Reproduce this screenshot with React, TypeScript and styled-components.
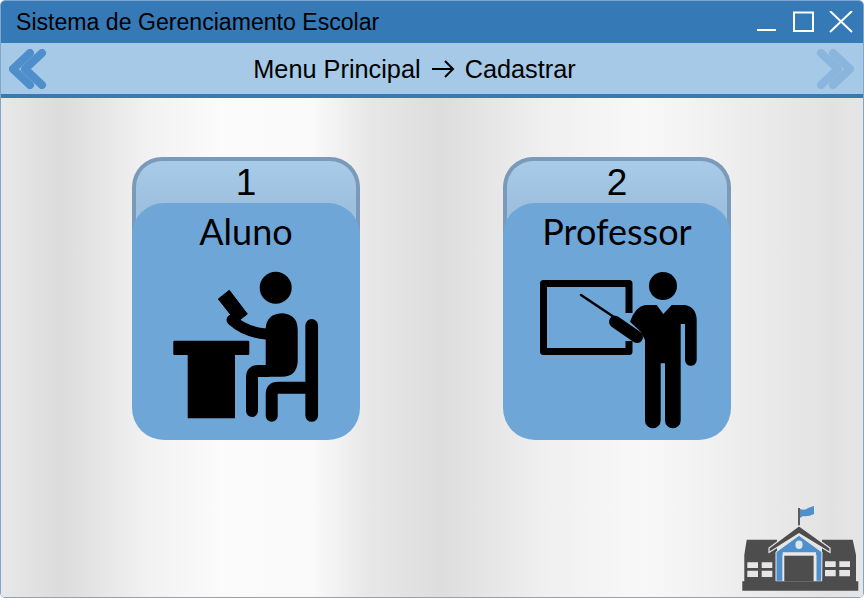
import styled, { createGlobalStyle } from "styled-components";

const GlobalStyle = createGlobalStyle`
  html, body {
    margin: 0;
    padding: 0;
    background: #ffffff;
  }
`;

const Window = styled.div`
  box-sizing: border-box;
  width: 864px;
  height: 598px;
  display: flex;
  flex-direction: column;
  border: 1px solid #7fa6cc;
  border-radius: 5px;
  overflow: hidden;
  font-family: "Liberation Sans", Arial, sans-serif;
  color: #000;
`;

const TitleBar = styled.header`
  height: 42px;
  flex: none;
  display: flex;
  align-items: center;
  justify-content: space-between;
  padding: 0 10px 0 15px;
  background: #3579b6;
  font-size: 23.1px;
`;

const WindowButtons = styled.div`
  display: flex;
  align-items: center;
  gap: 15px;
`;

const NavBar = styled.nav`
  height: 55px;
  flex: none;
  box-sizing: border-box;
  display: flex;
  align-items: center;
  justify-content: space-between;
  padding: 0 9px 0 8px;
  background: #a5c9e6;
  border-bottom: 4px solid #3579b6;
`;

const Crumbs = styled.div`
  display: flex;
  align-items: center;
  gap: 10px;
  font-size: 25.3px;
  padding: 1px 34px 0 0;
`;

const Main = styled.main`
  flex: 1;
  display: flex;
  flex-direction: column;
  justify-content: space-between;
  padding: 59px 3px 4px 131px;
  background: linear-gradient(
    90deg,
    #e8e8e8 0px,
    #dcdcdc 60px,
    #f2f2f2 150px,
    #fbfbfb 220px,
    #fafafa 310px,
    #e8e8e8 365px,
    #dddddd 440px,
    #efefef 540px,
    #f8f8f8 640px,
    #f3f3f3 690px,
    #e2e2e2 830px,
    #e6e6e6 864px
  );
`;

const Cards = styled.div`
  display: flex;
  gap: 143px;
`;

const Card = styled.div`
  position: relative;
  width: 228px;
  height: 283px;
`;

const Tab = styled.div`
  box-sizing: border-box;
  height: 92px;
  text-align: center;
  font-size: 37px;
  line-height: 44px;
  border: 4px solid #7b99b8;
  border-bottom: none;
  border-radius: 30px 30px 0 0;
  background: linear-gradient(180deg, #a7cbe8 0%, #9dc0df 50%);
`;

const Face = styled.div`
  position: absolute;
  left: 0;
  right: 0;
  top: 46px;
  bottom: 0;
  display: flex;
  flex-direction: column;
  align-items: center;
  background: #6fa6d8;
  border-radius: 32px;
`;

const FaceLabel = styled.div`
  height: 58px;
  font-family: Lato, sans-serif;
  font-size: 36px;
  line-height: 57px;
`;

const Picture = styled.svg`
  display: block;
`;

const Footer = styled.footer`
  display: flex;
  justify-content: flex-end;
`;

function Student() {
  return (
    <Picture width="228" height="178" viewBox="0 0 228 178">
      <circle cx="143.7" cy="26.7" r="16" fill="#000" />
      <path d="M86.3 38 L97.3 29.3 L115.3 53 L104.7 61.3 Z" fill="#000" stroke="#000" strokeWidth="1" strokeLinejoin="round" />
      <path d="M100 59 Q113 71 134 73" fill="none" stroke="#000" strokeWidth="11" strokeLinecap="round" />
      <path d="M133.7 67.3 Q134.7 52.3 151.3 52.3 Q165.7 54 165.7 69 L165.7 100.7 Q164.7 115.7 149.7 115.7 L126.3 115.7 L126.3 104 L133.7 104 Z" fill="#000" />
      <path d="M135 110 L126 110 Q120 110 120 116 L120 150" fill="none" stroke="#000" strokeWidth="12" strokeLinecap="round" />
      <path d="M42.3 79.7 L116.3 79.7 Q117.3 79.7 117.3 80.7 L117.3 93 Q117.3 94 116.3 94 L103 94 L103 157.3 L55.7 157.3 L55.7 94 L42.3 94 Q41.3 94 41.3 93 L41.3 80.7 Q41.3 79.7 42.3 79.7 Z" fill="#000" />
      <path d="M180 126.7 L146 126.7 Q139.7 126.7 139.7 133 L139.7 154.7" fill="none" stroke="#000" strokeWidth="12" strokeLinecap="round" />
      <path d="M179.7 64.4 L179.7 154.4" fill="none" stroke="#000" strokeWidth="12.7" strokeLinecap="round" />
    </Picture>
  );
}

function Teacher() {
  return (
    <Picture width="228" height="178" viewBox="0 0 228 178">
      <circle cx="160" cy="25" r="14" fill="#000" />
      <path d="M126 52 L126 22.5 L40.5 22.5 L40.5 90.5 L126 90.5 L126 80" fill="none" stroke="#000" strokeWidth="7" strokeLinejoin="round" />
      <path d="M78 34 L112 56.7" stroke="#000" strokeWidth="2.5" strokeLinecap="round" />
      <path d="M112 60.7 L134 76" stroke="#000" strokeWidth="12" strokeLinecap="round" />
      <path d="M127 60.7 Q132 46 142 44 L153.7 44 L160.3 53 L168.7 44 L182 44 Q193.7 46 193.7 60 L193.7 99 A5.85 5.85 0 0 1 182 99 L182 63 L177.7 63 L177.7 159.5 A7.85 7.85 0 0 1 162 159.5 L162 102.3 L157.7 102.3 L157.7 159.5 A7.85 7.85 0 0 1 142 159.5 L142 79 L137.7 70.7 Z" fill="#000" />
    </Picture>
  );
}

function School() {
  return (
    <Picture width="120" height="90" viewBox="10 5 120 90">
      <path d="M69 10 L69 28" stroke="#4d4d4d" strokeWidth="1.8" />
      <path d="M70 11 Q75 13 78 10 L84 8 L84 16 Q78 19 73 18 L70 20 Z" fill="#4f8fcb" />
      <path d="M16.7 41.7 L47 41.7 L47 84 L14.3 84 L14.3 57 Z" fill="#4d4d4d" />
      <path d="M92 41.7 L122.7 41.7 L126 57 L126 84 L92 84 Z" fill="#4d4d4d" />
      <path d="M69 27.7 L100 50 L100 54.5 L69 35.7 L39 54.5 L39 50 Z" fill="#4d4d4d" stroke="#e8e8e8" strokeWidth="1.2" />
      <path d="M69 37.3 L92 54 L91.7 83.3 L86 83.3 L86 57 L53 57 L53 83.3 L46 83.3 L46 54 Z" fill="#4f8fcb" stroke="#e8e8e8" strokeWidth="1" />
      <ellipse cx="69" cy="46.7" rx="3.6" ry="4.2" fill="#dfe5ea" />
      <path d="M52.7 54.3 H86 V83.3 H52.7 Z" fill="#e8e8e8" />
      <path d="M54.3 57.7 H83.6 V83.3 H54.3 Z" fill="#4d4d4d" />
      <path d="M17.3 64.3 H28 V70 H17.3 Z M31.7 64.3 H42.3 V70 H31.7 Z M17.3 72.7 H28 V79 H17.3 Z M31.7 72.7 H42.3 V79 H31.7 Z" fill="#e6e6e6" />
      <path d="M95 63.3 H105.7 V69 H95 Z M109.3 63.3 H120 V69 H109.3 Z M95 72 H105.7 V78.3 H95 Z M109.3 72 H120 V78.3 H109.3 Z" fill="#e6e6e6" />
      <path d="M12.3 83.3 H128.3 V92.7 H12.3 Z" fill="#4d4d4d" />
    </Picture>
  );
}

function Chevrons({ right, color }: { right?: boolean; color: string }) {
  return (
    <Picture width="38" height="40" viewBox="0 0 38 40">
      <g
        fill="none"
        stroke={color}
        strokeWidth="8"
        strokeLinecap="round"
        strokeLinejoin="round"
        transform={right ? "matrix(-1 0 0 1 38 0)" : undefined}
      >
        <path d="M21 4 L4 20 L21 36" />
        <path d="M33 4 L16 20 L33 36" />
      </g>
    </Picture>
  );
}

export default function App() {
  return (
    <>
      <GlobalStyle />
      <Window>
        <TitleBar>
          <span>Sistema de Gerenciamento Escolar</span>
          <WindowButtons>
            <Picture width="20" height="22" viewBox="0 0 20 22">
              <path d="M0 19 H19" stroke="#fff" strokeWidth="2" />
            </Picture>
            <Picture width="22" height="22" viewBox="0 0 22 22">
              <rect x="2" y="1.5" width="19" height="18.5" fill="none" stroke="#fff" strokeWidth="2" />
            </Picture>
            <Picture width="24" height="22" viewBox="0 0 24 22">
              <path d="M1 0 L23 21 M23 0 L1 21" stroke="#fff" strokeWidth="2" />
            </Picture>
          </WindowButtons>
        </TitleBar>
        <NavBar>
          <Chevrons color="#4d8ecb" />
          <Crumbs>
            <span>Menu Principal</span>
            <Picture width="24" height="20" viewBox="0 0 24 20">
              <path d="M1 10 H22 M14 2 L22 10 L14 18" fill="none" stroke="#000" strokeWidth="2" />
            </Picture>
            <span>Cadastrar</span>
          </Crumbs>
          <Chevrons right color="#8ab6de" />
        </NavBar>
        <Main>
          <Cards>
            <Card>
              <Tab>1</Tab>
              <Face>
                <FaceLabel>Aluno</FaceLabel>
                <Student />
              </Face>
            </Card>
            <Card>
              <Tab>2</Tab>
              <Face>
                <FaceLabel>Professor</FaceLabel>
                <Teacher />
              </Face>
            </Card>
          </Cards>
          <Footer>
            <School />
          </Footer>
        </Main>
      </Window>
    </>
  );
}
